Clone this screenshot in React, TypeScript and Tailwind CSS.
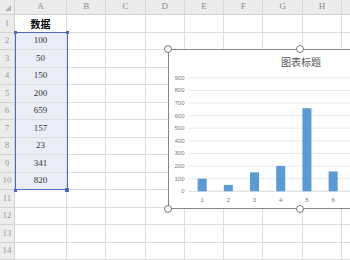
import React from "react";

const COLS = ["A", "B", "C", "D", "E", "F", "G", "H", ""];
const DATA = [100, 50, 150, 200, 659, 157, 23, 341, 820];
const ROWS = 14;

const serif = { fontFamily: '"Liberation Serif", "Noto Sans CJK SC", serif' };

function HeaderRow() {
  return (
    <div className="flex h-[15px] bg-[#ececec] border-b border-[#d2d2d2]">
      <div className="w-[15px] shrink-0 border-r border-[#d2d2d2] relative">
        <svg className="absolute right-[3px] bottom-[3px]" width="6" height="6" viewBox="0 0 6 6">
          <polygon points="6,0 6,6 0,6" fill="#b5b5b5" />
        </svg>
      </div>
      {COLS.map((c, i) => (
        <div
          key={i}
          className={
            (i === 0 ? "w-[52px]" : "w-[39.3px]") +
            " shrink-0 flex items-center justify-center border-r border-[#d8d8d8] text-[9px] text-[#8a8a8a]"
          }
          style={serif}
        >
          {c}
        </div>
      ))}
    </div>
  );
}

function Row({ n }: { n: number }) {
  const selected = n >= 2 && n <= 10;
  return (
    <div className="flex h-[17.5px]">
      <div
        className="w-[15px] shrink-0 bg-[#ececec] border-r border-b border-[#d2d2d2] flex items-center justify-center text-[9px] text-[#9a9a9a]"
        style={serif}
      >
        {n}
      </div>
      {COLS.map((c, i) => {
        let content: React.ReactNode = null;
        if (i === 0 && n === 1) {
          content = (
            <span className="font-bold text-[10px] text-black" style={{ fontFamily: '"Noto Sans CJK SC", sans-serif' }}>
              数据
            </span>
          );
        } else if (i === 0 && selected) {
          content = <span className="text-[9px] text-[#333]">{DATA[n - 2]}</span>;
        }
        return (
          <div
            key={i}
            className={
              (i === 0 ? "w-[52px]" : "w-[39.3px]") +
              " shrink-0 flex items-center justify-center border-r border-b border-[#dedede] " +
              (i === 0 && selected ? "bg-[#e8edf8]" : "bg-white")
            }
            style={serif}
          >
            {content}
          </div>
        );
      })}
    </div>
  );
}

function Chart() {
  const values = [100, 50, 150, 200, 659, 157, 23, 341, 820];
  const y0 = 191;
  const unit = 12.55 / 100;
  const ticks = [0, 100, 200, 300, 400, 500, 600, 700, 800, 900];
  return (
    <div className="absolute left-[168px] top-[49px] w-[264px] h-[160px] bg-white border-[1.5px] border-[#858585]">
      <svg className="block w-full h-full" viewBox="169.5 50.5 261 157">
        <text
          x="301"
          y="62"
          textAnchor="middle"
          dominantBaseline="central"
          fontSize="10"
          fill="#595959"
          fontFamily='"Noto Sans CJK SC", sans-serif'
        >
          图表标题
        </text>
        {ticks.map((t) => {
          const y = y0 - t * unit;
          return (
            <g key={t}>
              <line x1="189" x2="432" y1={y} y2={y} stroke={t === 0 ? "#cfcfcf" : "#e3e3e3"} strokeWidth="0.8" />
              <text
                x="185"
                y={y}
                textAnchor="end"
                dominantBaseline="central"
                fontSize="6"
                fill="#7a7a7a"
                fontFamily='"Liberation Sans", sans-serif'
              >
                {t}
              </text>
            </g>
          );
        })}
        {values.map((v, i) => {
          const cx = 202.5 + 26.1 * i;
          const h = v * unit;
          return (
            <g key={i}>
              <rect x={cx - 4.5} y={y0 - h} width="9" height={h} fill="#5b9bd5" />
              {cx < 345 && (
                <text
                  x={cx}
                  y="200"
                  textAnchor="middle"
                  dominantBaseline="central"
                  fontSize="6"
                  fill="#7a7a7a"
                  fontFamily='"Liberation Sans", sans-serif'
                >
                  {i + 1}
                </text>
              )}
            </g>
          );
        })}
      </svg>
      <div className="absolute -left-[5px] -top-[5px] w-[8px] h-[8px] rounded-full bg-white border border-[#7a7a7a]" />
      <div className="absolute left-[127px] -top-[5px] w-[8px] h-[8px] rounded-full bg-white border border-[#7a7a7a]" />
      <div className="absolute -left-[5px] -bottom-[5px] w-[8px] h-[8px] rounded-full bg-white border border-[#7a7a7a]" />
      <div className="absolute left-[127px] -bottom-[5px] w-[8px] h-[8px] rounded-full bg-white border border-[#7a7a7a]" />
    </div>
  );
}

export default function App() {
  const rows = Array.from({ length: ROWS }, (_, i) => i + 1);
  return (
    <div className="relative w-[350px] h-[260px] overflow-hidden bg-white">
      <HeaderRow />
      {rows.map((n) => (
        <Row key={n} n={n} />
      ))}
      {/* selection box A2:A10 */}
      <div className="absolute left-[15px] top-[32px] w-[52.5px] h-[158px] border-[1.5px] border-[#4d68c0]" />
      <div className="absolute left-[14px] top-[31px] w-[3px] h-[3px] bg-[#4d68c0]" />
      <div className="absolute left-[65.5px] top-[31px] w-[3px] h-[3px] bg-[#4d68c0]" />
      <div className="absolute left-[14px] top-[188.5px] w-[3px] h-[3px] bg-[#4d68c0]" />
      <div className="absolute left-[65px] top-[188px] w-[4px] h-[4px] bg-[#4d68c0]" />
      <Chart />
    </div>
  );
}
